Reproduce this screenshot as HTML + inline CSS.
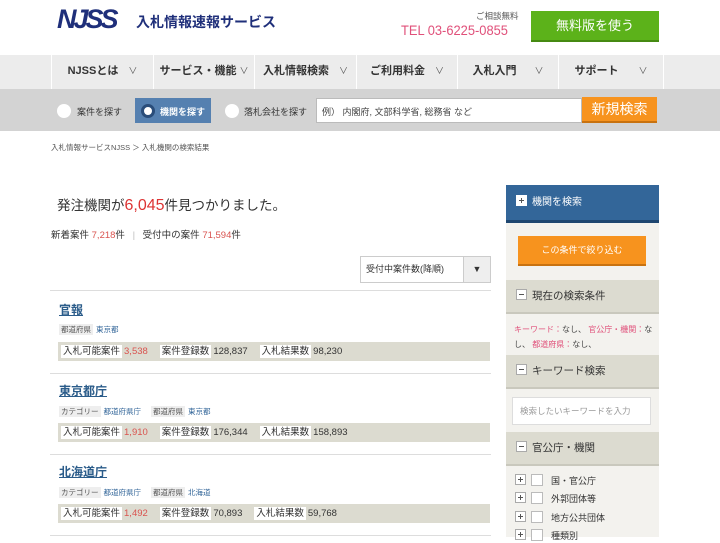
<!DOCTYPE html>
<html><head><meta charset="utf-8"><style>
*{margin:0;padding:0;box-sizing:border-box}
body{width:720px;height:537px;overflow:hidden;background:#fff;font-family:"Liberation Sans","Noto Sans CJK JP",sans-serif;color:#333;position:relative}
.a{position:absolute}
.nav{left:0;top:55px;width:720px;height:34px;background:#ececec}
.nav div{position:absolute;top:0;height:34px;line-height:33px;font-size:11px;font-weight:bold;color:#333;text-align:center;border-left:1px solid #fff}
.nav div span{font-weight:normal;color:#555;font-size:9px;margin-left:10px}
.sb{left:0;top:89px;width:720px;height:42px;background:#d3d3d3}
.radio{width:14px;height:14px;border-radius:50%;background:#fff}
.f10{font-size:9px;color:#333}
.bar{background:#dcdbd0;height:19px;left:58px;width:432px;font-size:9.5px;line-height:19px;padding-left:3px}
.bar b{font-weight:normal;background:#fff;padding:1px 2px}
.bar i{font-style:normal;color:#d9534f;margin-right:12px;margin-left:2px}
.bar s{text-decoration:none;margin-right:12px;margin-left:2px}
.tag{font-size:7.5px;color:#555}
.tag b{font-weight:normal;background:#eee;padding:1px 2px;margin-right:3px}
.tag em{font-style:normal;color:#336699;margin-right:10px}
.ttl{font-size:12px;font-weight:bold;color:#2b5c8a;text-decoration:underline}
.hr{left:50px;width:441px;height:1px;background:#ddd}
.side{left:506px;top:185px;width:153px;height:352px;background:#f3f2ee}
.sh{left:506px;width:153px;height:34px;background:#dcdbd0;border-bottom:2px solid #c9c8bd;font-size:10.5px;line-height:33px;padding-left:10px}
.mi{display:inline-block;width:11px;height:11px;background:#fff;border:1px solid #aaa;vertical-align:-1px;margin-right:5px;position:relative}
.mi:after{content:"";position:absolute;left:2px;top:4px;width:5px;height:1px;background:#555}
.pl:before{content:"";position:absolute;left:4px;top:2px;width:1px;height:5px;background:#555}
.cb{font-size:9px;left:515px;height:14px;line-height:14px}
.cb .box{display:inline-block;width:12px;height:12px;background:#fff;border:1px solid #bbb;vertical-align:-2px;margin-right:8px}
</style></head><body>
<div class="a" style="left:57px;top:4px;font:italic 900 27px 'Liberation Sans',sans-serif;color:#1f2f7a;letter-spacing:-3px">NJSS</div>
<div class="a" style="left:136px;top:12px;font-size:14px;font-weight:bold;color:#1f2f7a">入札情報速報サービス</div>
<div class="a" style="left:476px;top:10px;font-size:8.5px;color:#555">ご相談無料</div>
<div class="a" style="left:401px;top:22px;font-size:14px;color:#e0507a;transform:scaleX(0.92);transform-origin:left">TEL 03-6225-0855</div>
<div class="a" style="left:531px;top:11px;width:128px;height:31px;background:#5cb21a;border-bottom:2px solid #468a12;color:#fff;font-size:13px;text-align:center;line-height:29px">無料版を使う</div>
<div class="a nav">
<div style="left:51px;width:102px">NJSSとは<span>∨</span></div>
<div style="left:153px;width:101px">サービス・機能<span style="margin-left:3px">∨</span></div>
<div style="left:254px;width:102px">入札情報検索<span>∨</span></div>
<div style="left:356px;width:101px">ご利用料金<span>∨</span></div>
<div style="left:457px;width:101px">入札入門<span style="margin-left:18px">∨</span></div>
<div style="left:558px;width:106px;border-right:1px solid #fff">サポート<span style="margin-left:20px">∨</span></div>
</div>
<div class="a sb"></div>
<div class="a radio" style="left:57px;top:104px"></div>
<div class="a f10" style="left:77px;top:105px">案件を探す</div>
<div class="a" style="left:135px;top:98px;width:76px;height:25px;background:#5580b0"></div>
<div class="a" style="left:141px;top:104px;width:14px;height:14px;border-radius:50%;background:#fff;border:3px solid #2a4d7a"></div>
<div class="a" style="left:160px;top:105px;font-size:9px;color:#fff;font-weight:bold">機関を探す</div>
<div class="a radio" style="left:225px;top:104px"></div>
<div class="a f10" style="left:244px;top:105px">落札会社を探す</div>
<div class="a" style="left:316px;top:98px;width:266px;height:25px;background:#fff;border:1px solid #bbb"></div>
<div class="a" style="left:322px;top:105px;font-size:9px;color:#444">例） 内閣府, 文部科学省, 総務省 など</div>
<div class="a" style="left:582px;top:97px;width:75px;height:26px;background:#f7931e;border-bottom:2px solid #c87210;color:#fff;font-size:14px;text-align:center;line-height:25px">新規検索</div>
<div class="a" style="left:51px;top:142px;font-size:7.5px;color:#555">入札情報サービスNJSS ＞ 入札機関の検索結果</div>

<div class="a" style="left:57px;top:194px;font-size:13.5px;color:#333">発注機関が<span style="color:#d33;font-size:16px">6,045</span>件見つかりました。</div>
<div class="a" style="left:51px;top:227px;font-size:9.5px">新着案件 <span style="color:#d9534f">7,218</span>件 <span style="color:#bbb;margin:0 5px">|</span> 受付中の案件 <span style="color:#d9534f">71,594</span>件</div>
<div class="a" style="left:360px;top:256px;width:131px;height:27px;border:1px solid #ccc;background:#fff;font-size:9px;line-height:25px;padding-left:5px">受付中案件数(降順)</div>
<div class="a" style="left:463px;top:257px;width:27px;height:25px;background:#eee;border-left:1px solid #ccc;text-align:center;line-height:25px;font-size:9px">▼</div>
<div class="a hr" style="top:290px"></div>

<div class="a ttl" style="left:59px;top:301px">官報</div>
<div class="a tag" style="left:59px;top:324px"><b>都道府県</b><em>東京都</em></div>
<div class="a bar" style="top:342px"><b>入札可能案件</b><i>3,538</i><b>案件登録数</b><s>128,837</s><b>入札結果数</b><s>98,230</s></div>
<div class="a hr" style="top:373px"></div>

<div class="a ttl" style="left:59px;top:382px">東京都庁</div>
<div class="a tag" style="left:59px;top:406px"><b>カテゴリー</b><em>都道府県庁</em><b>都道府県</b><em>東京都</em></div>
<div class="a bar" style="top:423px"><b>入札可能案件</b><i>1,910</i><b>案件登録数</b><s>176,344</s><b>入札結果数</b><s>158,893</s></div>
<div class="a hr" style="top:454px"></div>

<div class="a ttl" style="left:59px;top:463px">北海道庁</div>
<div class="a tag" style="left:59px;top:487px"><b>カテゴリー</b><em>都道府県庁</em><b>都道府県</b><em>北海道</em></div>
<div class="a bar" style="top:504px"><b>入札可能案件</b><i>1,492</i><b>案件登録数</b><s>70,893</s><b>入札結果数</b><s>59,768</s></div>
<div class="a hr" style="top:535px"></div>

<div class="a side"></div>
<div class="a" style="left:506px;top:185px;width:153px;height:38px;background:#336699;border-bottom:3px solid #1e4670;color:#fff;font-size:10px;line-height:36px;padding-left:10px"><span class="mi pl" style="border-color:#fff"></span>機関を検索</div>
<div class="a" style="left:518px;top:236px;width:128px;height:30px;background:#f7931e;border-bottom:2px solid #c87210;color:#fff;font-size:9px;text-align:center;line-height:28px">この条件で絞り込む</div>
<div class="a sh" style="top:280px"><span class="mi"></span>現在の検索条件</div>
<div class="a" style="left:514px;top:322px;width:140px;font-size:8px;line-height:15px;color:#444"><span style="color:#e0507a">キーワード：</span>なし、 <span style="color:#e0507a">官公庁・機関：</span>なし、 <span style="color:#e0507a">都道府県：</span>なし、</div>
<div class="a sh" style="top:355px"><span class="mi"></span>キーワード検索</div>
<div class="a" style="left:512px;top:397px;width:139px;height:28px;background:#fff;border:1px solid #ddd;font-size:8.5px;color:#999;line-height:26px;padding-left:7px">検索したいキーワードを入力</div>
<div class="a sh" style="top:432px"><span class="mi"></span>官公庁・機関</div>
<div class="a cb" style="top:474px"><span class="mi pl"></span><span class="box"></span>国・官公庁</div>
<div class="a cb" style="top:492px"><span class="mi pl"></span><span class="box"></span>外郭団体等</div>
<div class="a cb" style="top:511px"><span class="mi pl"></span><span class="box"></span>地方公共団体</div>
<div class="a cb" style="top:529px"><span class="mi pl"></span><span class="box"></span>種類別</div>
</body></html>
